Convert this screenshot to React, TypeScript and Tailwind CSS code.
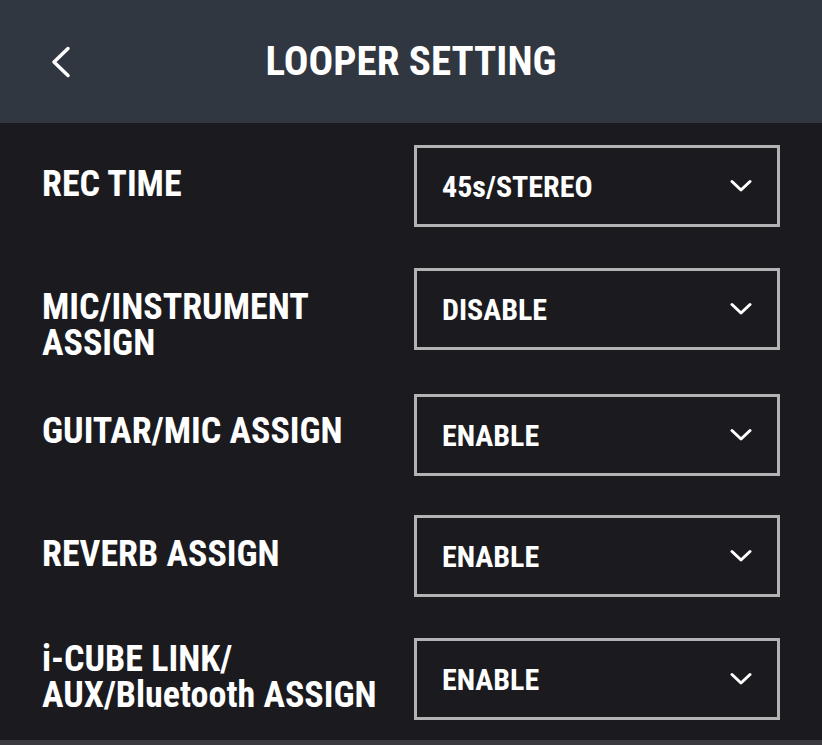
import React from 'react';

type Row = { label: React.ReactNode; value: string; rowClass: string; labelClass: string };

const rows: Row[] = [
  { label: 'REC TIME', value: '45s/STEREO', rowClass: 'mt-[22px]', labelClass: 'mt-[21px]' },
  { label: <>MIC/INSTRUMENT<br />ASSIGN</>, value: 'DISABLE', rowClass: 'mt-[41px]', labelClass: 'mt-[21px]' },
  { label: 'GUITAR/MIC ASSIGN', value: 'ENABLE', rowClass: 'mt-[44px]', labelClass: 'mt-[19px]' },
  { label: 'REVERB ASSIGN', value: 'ENABLE', rowClass: 'mt-[39px]', labelClass: 'mt-[21px]' },
  { label: <>i-CUBE LINK/<br />AUX/Bluetooth ASSIGN</>, value: 'ENABLE', rowClass: 'mt-[41px]', labelClass: 'mt-[3px]' },
];

const ChevronDown = () => (
  <svg width="22" height="14" viewBox="0 0 22 14" fill="none" className="shrink-0">
    <path d="M2 2.5 L11 11 L20 2.5" stroke="white" strokeWidth="3" strokeLinecap="round" strokeLinejoin="round" />
  </svg>
);

const ChevronLeft = () => (
  <svg width="22" height="32" viewBox="0 0 22 32" fill="none">
    <path d="M18 2.5 L4 16 L18 29.5" stroke="white" strokeWidth="3.5" strokeLinecap="round" strokeLinejoin="round" />
  </svg>
);

export default function App() {
  return (
    <div
      className="w-[822px] h-[745px] bg-[#1b1b1f] flex flex-col overflow-hidden text-white font-bold"
      style={{ fontFamily: '"Roboto Condensed", Roboto, "Liberation Sans", sans-serif' }}
    >
      {/* Header */}
      <header className="relative h-[123px] shrink-0 bg-[#313740] flex items-center justify-center">
        <button className="absolute left-[50px] top-[46px]">
          <ChevronLeft />
        </button>
        <h1 className="text-[41px] leading-none">LOOPER SETTING</h1>
      </header>

      {/* Settings */}
      <main className="flex-1 px-[42px] flex flex-col">
        {rows.map((row, i) => (
          <div key={i} className={`flex h-[82px] shrink-0 ${row.rowClass}`}>
            <div className={`flex-1 self-start text-[36px] leading-[36px] whitespace-nowrap ${row.labelClass}`}>
              {row.label}
            </div>
            <div className="w-[366px] h-[82px] border-[3px] border-[#b3b3b5] flex items-center justify-between pl-[25px] pr-[25px]">
              <span className="text-[30px] leading-none mt-[2px]">{row.value}</span>
              <ChevronDown />
            </div>
          </div>
        ))}
      </main>

      <div className="h-[5px] shrink-0 bg-[#3b3b3f]" />
    </div>
  );
}
